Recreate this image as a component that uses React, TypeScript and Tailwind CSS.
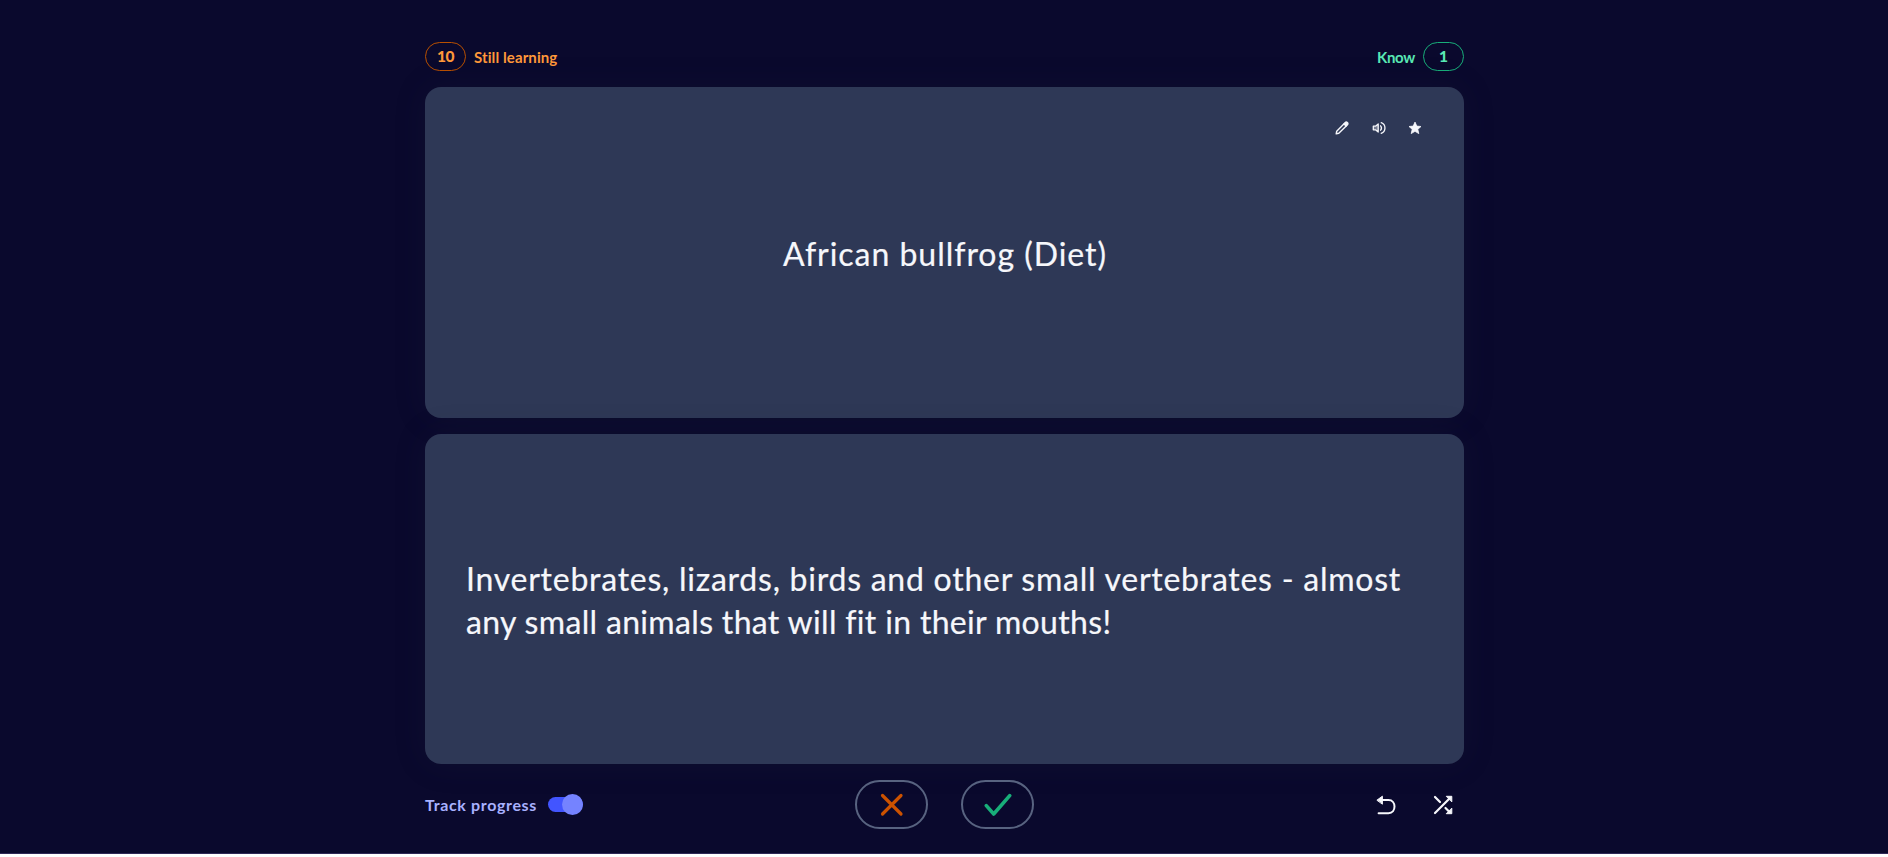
function Pencil() {
  return (
    <svg width="14" height="14" viewBox="0 0 14 14" fill="none" stroke="#f6f7fb" strokeWidth="1.4" strokeLinejoin="round">
      <path d="M1.2 12.8 1.7 10.2 9.6 2.3 11.7 4.4 3.8 12.3Z" />
      <path d="M9 2.9 10.7 1.2Q11.5.8 12.3 1.6 13.2 2.5 12.8 3.3L11.1 5Z" fill="#f6f7fb" />
    </svg>
  );
}

function Speaker() {
  return (
    <svg width="14" height="14" viewBox="0 0 14 14" fill="none" stroke="#f6f7fb" strokeWidth="1.3" strokeLinejoin="round" strokeLinecap="round">
      <path d="M1.3 5.2H3.5L6.2 3V11L3.5 8.8H1.3Z" fill="#f6f7fb" fillOpacity=".35" />
      <path d="M8.6 4.8Q10.4 7 8.6 9.2" />
      <path d="M9.2 1.7C14.2 3.6 14.2 10.4 9.2 12.3" />
    </svg>
  );
}

function Star() {
  return (
    <svg width="14" height="14" viewBox="0 0 14 14" fill="#f6f7fb" stroke="#f6f7fb" strokeWidth=".8" strokeLinejoin="round">
      <path d="M7 1.1 8.8 5.1 13 5.5 9.8 8.3 10.8 12.6 7 10.3 3.2 12.6 4.2 8.3 1 5.5 5.2 5.1Z" />
    </svg>
  );
}

export default function App() {
  return (
    <div className="flex h-[857px] flex-col bg-white font-['Lato',sans-serif] text-[#f6f7fb]">
      <div className="flex h-[854px] justify-center overflow-hidden border-b border-[#2e2856] bg-[#0a092d] pl-px">
        <main className="flex w-[1039px] flex-col pt-[42px]">
          <header className="flex h-[29px] shrink-0 items-center justify-between text-[15px] font-bold">
            <div className="flex items-center gap-2 text-[#ff983a]">
              <span className="flex h-[29px] w-[41px] items-center justify-center rounded-full border border-[#b95000] pt-px text-[15.5px] font-black tracking-[-0.5px]">10</span>
              <span className="whitespace-nowrap pt-0.5 tracking-[0.1px]">Still learning</span>
            </div>
            <div className="flex items-center gap-2 text-[#59e8b5]">
              <span className="pt-0.5 tracking-[-0.3px]">Know</span>
              <span className="flex h-[29px] w-[41px] items-center justify-center rounded-full border border-[#18ae79] pt-px text-[15.5px] font-black">1</span>
            </div>
          </header>

          <section className="mt-4 flex h-[331px] shrink-0 flex-col rounded-2xl bg-[#2e3856] shadow-[0_0_32px_rgba(40,46,62,0.16)]">
            <div className="flex h-[82px] items-center justify-end gap-[22.5px] pr-[42px]">
              <Pencil />
              <Speaker />
              <Star />
            </div>
            <div className="flex h-[170px] items-center justify-center pl-px">
              <h1 className="whitespace-nowrap text-[32px] leading-[42.7px] tracking-[0.97px] [-webkit-text-stroke:0.2px]">African bullfrog (Diet)</h1>
            </div>
          </section>

          <section className="mt-4 flex h-[330px] shrink-0 items-center rounded-2xl bg-[#2e3856] px-[41px] pt-1 shadow-[0_0_32px_rgba(40,46,62,0.16)]">
            <p className="whitespace-nowrap text-[32px] leading-[42.7px] [-webkit-text-stroke:0.2px]">
              <span className="block tracking-[0.75px]">Invertebrates, lizards, birds and other small vertebrates - almost</span>
              <span className="block tracking-[0.33px]">any small animals that will fit in their mouths!</span>
            </p>
          </section>

          <footer className="mt-4 flex h-[49px] shrink-0 items-center justify-between">
            <div className="flex w-[300px] items-center gap-[11px]">
              <span className="whitespace-nowrap text-[16px] font-bold tracking-[0.65px] text-[#a8b1ff]">Track progress</span>
              <span className="flex h-[15px] w-[35px] items-center justify-end rounded-full bg-[#4255ff]">
                <span className="size-[21px] shrink-0 rounded-full bg-[#7583ff]" />
              </span>
            </div>
            <div className="flex justify-center gap-[33px]">
              <button className="flex h-[49px] w-[73px] items-center justify-center rounded-full border-2 border-[#586380]">
                <svg width="24" height="24" viewBox="0 0 24 24" fill="none" stroke="#cc5200" strokeWidth="3.2" strokeLinecap="round">
                  <path d="M2.5 2.5 21 21M21 2.5 2.5 21" />
                </svg>
              </button>
              <button className="flex h-[49px] w-[73px] items-center justify-center rounded-full border-2 border-[#586380]">
                <svg width="28" height="24" viewBox="0 0 28 24" fill="none" stroke="#18ae79" strokeWidth="3.6" strokeLinecap="round" strokeLinejoin="round">
                  <path d="M2.3 12.6 9.7 21 25.7 2.6" />
                </svg>
              </button>
            </div>
            <div className="flex w-[300px] items-center justify-end gap-[37px] pr-[11px]">
              <svg width="20" height="20" viewBox="0 0 20 20" fill="none" stroke="#f6f7fb" strokeWidth="2" strokeLinecap="round" strokeLinejoin="round">
                <path d="M4 5H12.5C20.5 5 20.5 18.2 12.5 18.2H2.6" />
                <path d="M1.2 5 6.4 1.2V8.8Z" fill="#f6f7fb" strokeWidth="1" />
              </svg>
              <svg width="20" height="20" viewBox="0 0 20 20" fill="none" stroke="#f6f7fb" strokeWidth="2.2" strokeLinecap="round" strokeLinejoin="round">
                <path d="M2 18 16.5 3.5M2 2 7 7M12.5 13 16.5 17" />
                <path d="M13.6 1.3H18.8V6.5ZM18.8 13.5V18.7H13.6Z" fill="#f6f7fb" strokeWidth="1" />
              </svg>
            </div>
          </footer>
        </main>
      </div>
    </div>
  );
}
